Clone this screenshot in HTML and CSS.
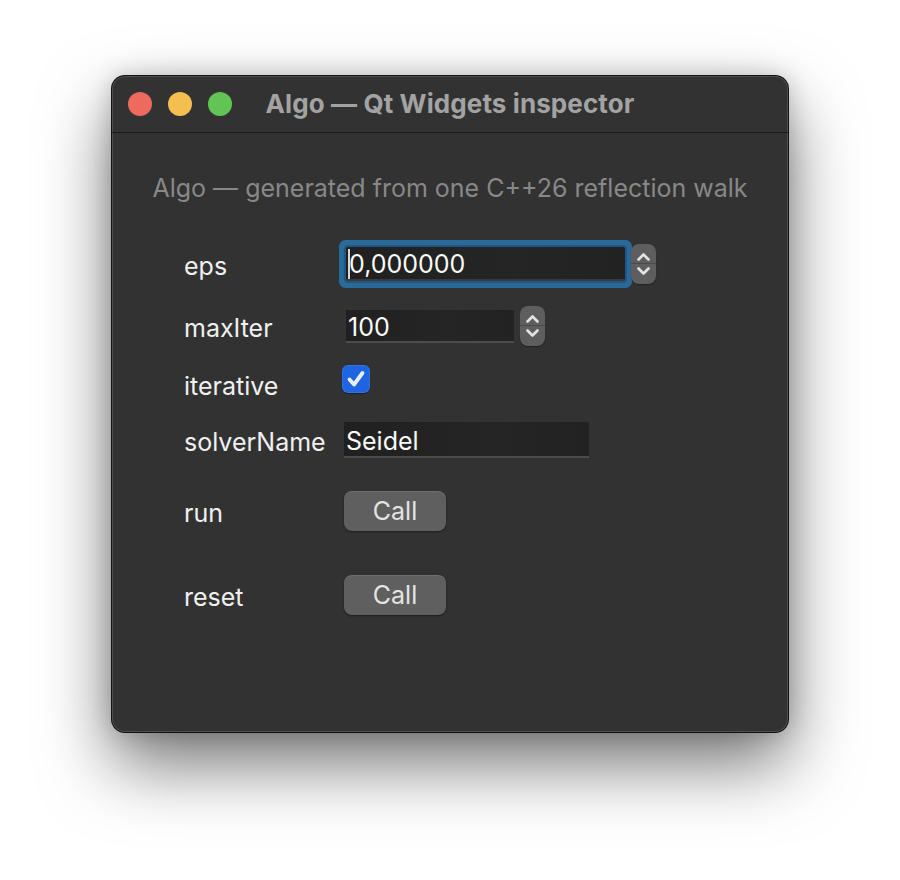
FILE: index.html
```html
<!DOCTYPE html>
<html lang="en">
<head>
    <meta charset="UTF-8">
    <title>Algo — Qt Widgets inspector</title>
    <link rel="stylesheet" href="styles.css">
</head>
<body>
    <div class="window">
        <div class="titlebar">
            <div class="lights">
                <span class="light red"></span>
                <span class="light yellow"></span>
                <span class="light green"></span>
            </div>
            <div class="title">Algo — Qt Widgets inspector</div>
            <div></div>
        </div>

        <div class="content">
            <p class="caption">Algo — generated from one C++26 reflection walk</p>

            <div class="form">
                <label class="name">eps</label>
                <div class="field-wrap">
                    <div class="field focused eps"><span class="caret"></span>0,000000</div>
                    <div class="spin">
                        <svg viewBox="0 0 25 40" width="25" height="40"><path d="M7.5 15.5 L12.5 10.5 L17.5 15.5 M7.5 24.5 L12.5 29.5 L17.5 24.5" /></svg>
                    </div>
                </div>

                <label class="name">maxIter</label>
                <div class="field-wrap">
                    <div class="field count">100</div>
                    <div class="spin">
                        <svg viewBox="0 0 25 40" width="25" height="40"><path d="M7.5 15.5 L12.5 10.5 L17.5 15.5 M7.5 24.5 L12.5 29.5 L17.5 24.5" /></svg>
                    </div>
                </div>

                <label class="name">iterative</label>
                <div class="check">
                    <svg viewBox="0 0 28 28" width="28" height="28"><path d="M7.5 14.5 L12 19.5 L20.5 8" /></svg>
                </div>

                <label class="name">solverName</label>
                <div class="field text">Seidel</div>

                <label class="name">run</label>
                <button class="call">Call</button>

                <label class="name">reset</label>
                <button class="call">Call</button>
            </div>
        </div>
    </div>
</body>
</html>
```

FILE: styles.css
```css
* {
    margin: 0;
    padding: 0;
    box-sizing: border-box;
}

html, body {
    min-height: 880px;
}

body {
    background: #ffffff;
    font-family: Inter, "Noto Sans", sans-serif;
    padding: 76px 0 0 112px;
}

.window {
    width: 676px;
    height: 656px;
    background: #323232;
    border-radius: 13px;
    box-shadow: 0 0 0 1px #111,
                inset 0 0 0 1px rgba(255,255,255,0.14),
                0 32px 70px rgba(0,0,0,0.55),
                0 0 24px rgba(0,0,0,0.2);
    overflow: hidden;
}

.titlebar {
    height: 57px;
    display: grid;
    grid-template-columns: 1fr auto 1fr;
    align-items: center;
    border-bottom: 1px solid #1b1b1b;
}

.lights {
    display: flex;
    gap: 16px;
    padding-left: 16px;
}

.light {
    width: 24px;
    height: 24px;
    border-radius: 50%;
}

.red { background: #ee6a5f; }
.yellow { background: #f5bf4f; }
.green { background: #61c554; }

.title {
    color: #a3a3a3;
    font-size: 26px;
    font-weight: 700;
    letter-spacing: 0.1px;
    margin-top: -2px;
}

.content {
    padding-top: 39px;
}

.caption {
    text-align: center;
    color: #888888;
    font-size: 25px;
    line-height: 32px;
}

.form {
    margin-top: 35px;
    padding-left: 72px;
    display: grid;
    grid-template-columns: 160px 1fr;
    grid-template-rows: 50px 74px 42px 70px 72px 96px;
    align-items: center;
}

.name {
    color: #f0f0f0;
    font-size: 25px;
    padding-top: 3px;
}

.field-wrap {
    display: flex;
    align-items: center;
}

.field {
    background: linear-gradient(90deg, #202020, #252525 60%, #222);
    border-bottom: 2px solid #4c4c4c;
    color: #fafafa;
    font-size: 25px;
    line-height: 32px;
    padding-left: 2px;
}

.field.eps {
    width: 279px;
    height: 34px;
    margin-left: 2px;
    border-bottom-color: #3a3a3a;
    display: flex;
    align-items: center;
    padding-top: 2px;
}

/* focus ring around the active spin box */
.field.focused {
    box-shadow: 0 0 0 2px #1f5683, 0 0 0 7px #296a9a;
    border-radius: 2px;
}

.caret {
    width: 2px;
    height: 30px;
    background: #d8d8d8;
    margin-right: -1px;
}

.field.count {
    width: 168px;
    height: 33px;
    margin-left: 2px;
    padding-top: 1px;
}

.field.text {
    width: 245px;
    height: 36px;
    padding-top: 3px;
}

.spin {
    width: 25px;
    height: 40px;
    background: #5e5e5e;
    border-radius: 8px;
    margin-left: 6px;
    position: relative;
    box-shadow: 0 1px 1px rgba(0,0,0,0.35);
}

.spin::after {
    content: "";
    position: absolute;
    left: 0;
    right: 0;
    top: 19px;
    height: 1px;
    background: #4a4a4a;
}

.spin svg {
    display: block;
}

.spin path {
    fill: none;
    stroke: #e4e4e4;
    stroke-width: 2.6;
    stroke-linecap: round;
    stroke-linejoin: round;
}

.check {
    width: 28px;
    height: 28px;
    margin: 0 0 10px -2px;
    border-radius: 6px;
    background: #1f65e2;
    box-shadow: inset 0 0 0 1px rgba(255,255,255,0.08), 0 1px 1px rgba(0,0,0,0.4);
}

.check svg {
    display: block;
}

.check path {
    fill: none;
    stroke: #e9eef9;
    stroke-width: 3.8;
    stroke-linecap: round;
    stroke-linejoin: round;
}

.call {
    width: 102px;
    height: 40px;
    border: none;
    border-radius: 8px;
    background: #5f5f5f;
    box-shadow: inset 0 1px 0 rgba(255,255,255,0.1), 0 1px 2px rgba(0,0,0,0.45);
    color: #e4e4e4;
    font-family: Inter, "Noto Sans", sans-serif;
    font-size: 25px;
    line-height: 40px;
    text-align: center;
}
```
